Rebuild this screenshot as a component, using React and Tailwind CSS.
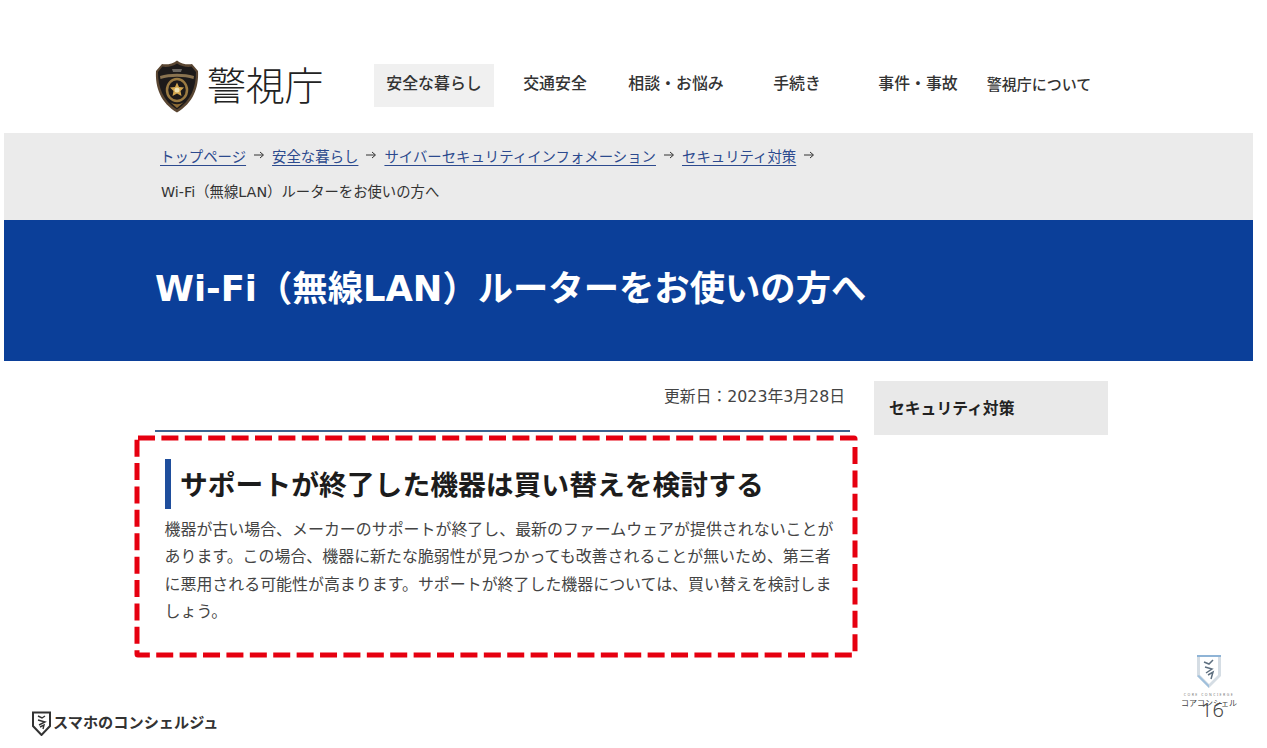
const fontStack = 'font-["Noto_Sans","Noto_Sans_CJK_JP",sans-serif]';
const latinWide = 'font-["DejaVu_Sans","Noto_Sans_CJK_JP",sans-serif]';

const navItems = ['安全な暮らし', '交通安全', '相談・お悩み', '手続き', '事件・事故', '警視庁について'];

function PoliceEmblem() {
  return (
    <svg width="44" height="53" viewBox="0 0 44 53" className="shrink-0">
      <path d="M22 0.5 C26 4 33 5 37 4 L43 11 C44 28 38 43 22 52.5 C6 43 0 28 1 11 L7 4 C11 5 18 4 22 0.5Z" fill="#5a4632" />
      <path d="M22 3.5 C26 6.5 33 7.5 36.5 6.5 L41 12 C41 27 36 41 22 49.5 C8 41 3 27 3 12 L7.5 6.5 C11 7.5 18 6.5 22 3.5Z" fill="#1d1a1a" />
      <path d="M5 16 C15 13 29 13 39 16 L38.5 19 C29 16 15 16 5.5 19Z" fill="#8a7350" />
      <path d="M17 9 L27 9 L26 12 L18 12Z" fill="#6b6660" />
      <ellipse cx="22" cy="30" rx="10" ry="11" fill="none" stroke="#9a7a42" strokeWidth="2.5" />
      <path d="M22 22.5 L24 27 L29 27.5 L25.5 31 L26.5 36 L22 33.5 L17.5 36 L18.5 31 L15 27.5 L20 27Z" fill="#d2a64e" />
      <circle cx="22" cy="30" r="2.5" fill="#f0e2b0" />
      <path d="M15 42 C19 45 25 45 29 42 L22 48Z" fill="#8c6a35" />
    </svg>
  );
}

function SmallShield() {
  return (
    <svg width="19" height="25" viewBox="0 0 19 25">
      <path d="M1 1.5 H18 V15 L9.5 24 L1 15Z" fill="#fff" stroke="#333" strokeWidth="2" />
      <path d="M6 5 L10 7 L13 5 M6 9 L13 11 L7 14 M8 16 L12 14 L11 18" fill="none" stroke="#333" strokeWidth="1.4" />
    </svg>
  );
}

function CoreShield() {
  return (
    <svg width="26" height="35" viewBox="0 0 26 35">
      <path d="M1 1 H25 V22 L13 34 L1 22Z" fill="#d5dde4" />
      <path d="M4 3 H22 V21 L13 30 L4 21Z" fill="#fff" />
      <path d="M1 1 H25 V3 H1Z" fill="#8fb4d6" />
      <path d="M1 22 L13 34 L13 31 L3 21Z" fill="#a0c0dc" />
      <path d="M8 8 L13 10 L17 6 M9 13 L16 15 L10 19 M12 21 L17 18 L15 25" fill="none" stroke="#5f7080" strokeWidth="1.5" />
    </svg>
  );
}

function Crumb({ children }) {
  return <a className="text-[#2c4a8e] underline underline-offset-[3px] decoration-1">{children}</a>;
}

function Arrow() {
  return (
    <svg width="12" height="10" viewBox="0 0 12 10" className="mx-[7px] mb-[6px] inline-block">
      <path d="M1 5 H10 M7 2 L10.5 5 L7 8" fill="none" stroke="#333" strokeWidth="1" />
    </svg>
  );
}

export default function App() {
  return (
    <div className={`relative h-[748px] w-[1267px] overflow-hidden bg-white text-[#333] ${fontStack}`}>
      {/* header */}
      <header className="flex h-[133px] pl-[155px] pt-[60px]">
        <PoliceEmblem />
        <div className="ml-[8px] w-[167px] text-[39px] font-light leading-[50px] tracking-[-0.2px] text-[#222]">警視庁</div>
        <nav className="mt-[4px] grid h-[43px] grid-cols-[repeat(6,121px)]">
          {navItems.map((item, i) => (
            <div
              key={item}
              className={`flex w-[120px] items-center justify-center pb-[3px] font-medium whitespace-nowrap text-[#333] ${i === 5 ? 'text-[15px]' : 'text-[15.9px]'} ${i === 0 ? 'bg-[#f0f0f0]' : ''}`}
            >
              {item}
            </div>
          ))}
        </nav>
      </header>

      {/* breadcrumb + title */}
      <div className="mx-[4px] w-[1249px]">
        <div className="h-[87px] bg-[#ebebeb] pl-[157px] pt-[11px] text-[14.4px] leading-[26px]">
          <div className="-ml-[1px]">
            <Crumb>トップページ</Crumb>
            <Arrow />
            <Crumb>安全な暮らし</Crumb>
            <Arrow />
            <Crumb>サイバーセキュリティインフォメーション</Crumb>
            <Arrow />
            <Crumb>セキュリティ対策</Crumb>
            <Arrow />
          </div>
          <div className={`mt-[9px] text-[14.35px] text-[#333] ${latinWide}`}>Wi-Fi（無線LAN）ルーターをお使いの方へ</div>
        </div>
        <div className={`flex h-[141px] items-center bg-[#0b3f99] pb-[4px] pl-[151px] text-[35.35px] font-bold whitespace-nowrap text-white ${latinWide}`}>
          Wi-Fi（無線LAN）ルーターをお使いの方へ
        </div>
      </div>

      {/* main */}
      <div className="flex pl-[155px] pt-[20px]">
        <main className="w-[695px]">
          <div className={`h-[51px] border-b-2 border-[#3d6390] pr-[5px] pt-[4px] text-right text-[15.8px] leading-[24px] text-[#444] ${latinWide}`}>
            更新日：2023年3月28日
          </div>
          <h2 className="ml-[10px] mt-[27px] flex h-[50px] items-center border-l-[6px] border-[#1f4e9c] pl-[9px] pt-[1px] text-[27.8px] font-bold whitespace-nowrap text-[#1c1c1c]">
            サポートが終了した機器は買い替えを検討する
          </h2>
          <p className="ml-[9.5px] mt-[7px] w-[670px] text-[15.95px] leading-[27.4px] text-[#444]">
            機器が古い場合、メーカーのサポートが終了し、最新のファームウェアが提供されないことがあります。この場合、機器に新たな脆弱性が見つかっても改善されることが無いため、第三者に悪用される可能性が高まります。サポートが終了した機器については、買い替えを検討しましょう。
          </p>
        </main>
        <aside className="ml-[24px] flex h-[54px] w-[234px] items-center bg-[#e9e9e9] pl-[15px] pt-[1px] text-[15.8px] font-bold text-[#222]">
          セキュリティ対策
        </aside>
      </div>

      {/* red dashed highlight */}
      <svg width="726" height="226" viewBox="0 0 726 226" className="absolute left-[133px] top-[433px]">
        <rect x="4" y="5" width="718" height="217" rx="1" fill="none" stroke="#e60010" strokeWidth="5" strokeDasharray="17 6.4" />
      </svg>

      {/* footer marks */}
      <div className="absolute bottom-[12px] left-[32px] flex items-center gap-[2px] text-[15.2px] font-bold leading-[25px] text-[#333]">
        <SmallShield />
        <span className="mb-[1px]">スマホのコンシェルジュ</span>
      </div>
      <div className="absolute left-[1177px] top-[654px] flex w-[64px] flex-col items-center">
        <CoreShield />
        <div className="mt-[3px] text-[3.5px] leading-[6px] tracking-[1.5px] text-[#777]">CORE CONCIERGE</div>
        <div className="text-[8px] leading-[10px] whitespace-nowrap text-[#444]">コアコンシェル</div>
      </div>
      <div className="absolute left-[1201px] top-[697px] text-[20px] font-light leading-[26px] text-[#444]">16</div>
    </div>
  );
}
